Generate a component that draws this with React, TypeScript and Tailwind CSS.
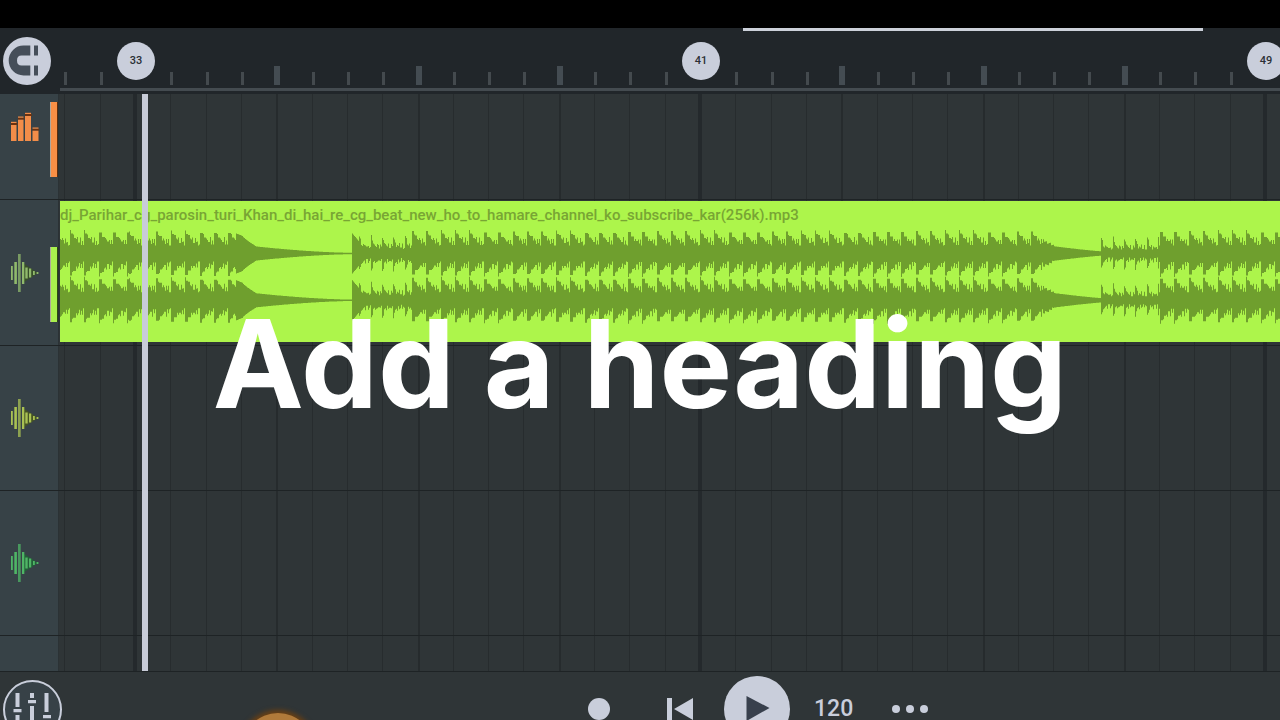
import React from "react";

type TrackKind = "drums" | "audio";

interface Track {
  name: string;
  kind: TrackKind;
  tone: string;
  shade: string;
  strip?: string;
  clip?: string;
}

const tracks: Track[] = [
  { name: "Drums", kind: "drums", tone: "fill-[#f38d49]", shade: "fill-[#6b3210]", strip: "bg-[#f98f45] border-r-[#5c2c0c]" },
  {
    name: "Audio 1",
    kind: "audio",
    tone: "fill-[#90b96c]",
    shade: "fill-[#3a5420]",
    strip: "bg-[#aaf04e] border-r-[#2c4a10]",
    clip: "dj_Parihar_cg_parosin_turi_Khan_di_hai_re_cg_beat_new_ho_to_hamare_channel_ko_subscribe_kar(256k).mp3",
  },
  { name: "Audio 2", kind: "audio", tone: "fill-[#a9c153]", shade: "fill-[#4b5a1a]" },
  { name: "Audio 3", kind: "audio", tone: "fill-[#4fb566]", shade: "fill-[#1d6a33]" },
  { name: "Audio 4", kind: "audio", tone: "fill-[#4fb5a0]", shade: "fill-[#1d6a5c]" },
];

const bars = Array.from({ length: 16 }, (_, i) => i);

/* The first segment starts before the visible range, so it carries no marker */
const segments = [
  { start: 25, marker: false },
  { start: 33, marker: true },
  { start: 41, marker: true },
  { start: 49, marker: true },
];

/* Half-height of the waveform, one value per pixel of a beat */
const loud = [22, 21, 20, 18, 17, 16, 14, 15, 12, 11, 15, 10, 13, 8];
const soft = [17, 14, 10, 8, 9, 7, 9, 7, 6, 9, 6];

function level(x: number, side: number): number {
  const wobble = ((Math.floor(x) * 37 + side * 11) % 7) - 3;
  const beat = (start: number, period: number, shape: number[]) => {
    const phase = (((x - start) % period) + period) % period;
    return shape[Math.min(shape.length - 1, Math.floor(phase))];
  };
  if (x < 176) return Math.max(8, beat(9.4, 14.4, loud) + wobble * 0.5);
  if (x < 182) return 20 - (x - 176) * 0.4;
  if (x < 196) return 17.6 - 10.6 * Math.pow((x - 182) / 14, 0.8);
  if (x < 292) return 0.7 + 6.3 * Math.pow((292 - x) / 96, 1.6);
  if (x < 299) return 20 - (x - 292) * 1.2;
  if (x < 351) return beat(299, 11.3, soft) + wobble * 0.5;
  if (x < 983) return Math.max(8, beat(351.4, 14.4, loud) + wobble * 0.5);
  if (x < 994) return 13 - (x - 983) * 0.5 + wobble * 0.4;
  if (x < 1041) return 2.2 + 5 * Math.pow((1041 - x) / 47, 1.2);
  if (x < 1099) return Math.max(4, beat(1041, 11.3, soft) - 1.5 + wobble * 0.5);
  return Math.max(8, beat(1099.4, 14.4, loud) + wobble * 0.5);
}

function channel(center: number, length: number): string {
  const top: string[] = [];
  const bottom: string[] = [];
  for (let x = 0; x < length; x++) {
    const up = (center - level(x, 0)).toFixed(1);
    const down = (center + level(x, 1)).toFixed(1);
    top.push(`L${x} ${up}H${x + 1}`);
    bottom.unshift(`L${x + 1} ${down}H${x}`);
  }
  return `M0 ${center}${top.join("")}${bottom.join("")}Z`;
}

const wavePath = channel(31.5, 1700) + channel(78.3, 1700);

function DrumsIcon({ tone, shade }: { tone: string; shade: string }) {
  const columns = [
    [0, 13, 5.5],
    [7, 7.7, 5.5],
    [14, 4, 6],
    [21.5, 18.7, 6],
  ];
  return (
    <svg className="h-[30px] w-7" viewBox="0 0 28 30" aria-hidden="true">
      {columns.map(([x, y, w]) => (
        <g key={x}>
          <rect className={shade} x={x} y={y - 2} width={w + 0.8} height={2} />
          <rect className={tone} x={x} y={y - 3.2} width={w} height={1.2} />
          <rect className={tone} x={x} y={y} width={w} height={29 - y} />
        </g>
      ))}
    </svg>
  );
}

function WaveIcon({ tone, shade }: { tone: string; shade: string }) {
  const lines = [
    [0, 7, 1.8],
    [3.3, 11, 2.6],
    [7, 19, 2.7],
    [11, 11, 2.3],
    [14.3, 5.5, 2.4],
    [18, 4.5, 2.2],
    [22, 2, 1.8],
    [25.6, 1, 1.8],
  ];
  return (
    <svg className="h-[38px] w-7" viewBox="0 0 28 38" aria-hidden="true">
      <path className={shade} d="M12 9L27 19L12 29Z" opacity="0.75" />
      {lines.map(([x, half, w]) => (
        <rect
          key={x}
          className={tone}
          x={x}
          y={19 - half}
          width={w}
          height={half * 2}
          opacity={half === 19 ? 0.75 : 1}
        />
      ))}
    </svg>
  );
}

function Ruler() {
  return (
    <header className="relative flex h-[66px] shrink-0 bg-[#21262a]">
      <div className="flex w-[60px] shrink-0 items-center pl-[3px]">
        <button type="button" aria-label="Snap to grid" className="size-12 rounded-full bg-[#c9cedb]">
          <svg className="size-12 fill-[#454e59]" viewBox="0 0 48 48" aria-hidden="true">
            <path d="M27.3 8.5H20.5A14.8 15 0 0 0 20.5 38.5H27.3V28.5H18.5Q14 28.5 14 23.5Q14 18.5 18.5 18.5H27.3Z" />
            <path d="M31 8.5h4v10h-4zM31 28.5h4v10h-4z" />
          </svg>
        </button>
      </div>
      <div className="flex min-w-0 flex-1 flex-col overflow-hidden">
        <div className="-ml-[490px] flex h-[57px]">
          {segments.map(({ start, marker }) => (
            <div key={start} className="relative grid w-[565px] shrink-0 grid-cols-16 items-end">
              {bars.map((bar) =>
                bar === 0 ? (
                  <span key={bar} />
                ) : bar % 4 === 0 ? (
                  <span key={bar} className="-ml-0.5 h-[19px] w-1.5 bg-[#444c52]" />
                ) : (
                  <span key={bar} className="h-[13px] w-[3px] bg-[#444a4e]" />
                ),
              )}
              {marker && (
                <button
                  type="button"
                  className="absolute top-3.5 -left-[18px] size-[38px] rounded-full bg-[#c9cedb] text-[11px] leading-4 font-medium text-[#2b3036]"
                >
                  {start}
                </button>
              )}
            </div>
          ))}
        </div>
        <div className="mt-[3px] h-[3px] bg-[#444b50]" />
      </div>
      <div className="absolute top-0 right-[77px] left-[743px] h-[3px] bg-[#ccd1da]" />
    </header>
  );
}

function GridLines() {
  return (
    <div className="absolute inset-y-0 right-0 left-[60px] overflow-hidden">
      <div className="-ml-[490px] flex h-full">
        {segments.map(({ start }) => (
          <div key={start} className="grid w-[565px] shrink-0 grid-cols-16">
            {bars.map((bar) => (
              <span
                key={bar}
                className={
                  bar === 0
                    ? "-ml-0.5 border-l-4 border-[#24292c]"
                    : bar % 4 === 0
                      ? "border-l-2 border-[#262b2d]"
                      : "border-l border-[#272c2e]"
                }
              />
            ))}
          </div>
        ))}
      </div>
    </div>
  );
}

function TrackRow({ track }: { track: Track }) {
  return (
    <li className="relative flex min-h-[145px] shrink-0 border-b border-[#1e2325]">
      <button
        type="button"
        aria-label={track.name}
        className="flex w-[59px] shrink-0 items-center justify-between border-r border-[#2b3235] bg-[#374247] pl-[11px]"
      >
        {track.kind === "drums" ? (
          <DrumsIcon tone={track.tone} shade={track.shade} />
        ) : (
          <WaveIcon tone={track.tone} shade={track.shade} />
        )}
        {track.strip && (
          <span className={`mt-6 h-[75px] w-2 border-r border-l border-l-[#b0a79c] ${track.strip}`} />
        )}
      </button>
      <div className="min-w-0 flex-1 pt-px pb-[3px] pl-px">
        {track.clip && (
          <div className="h-[141px] overflow-hidden bg-[#adf54b]">
            <p className="h-[21px] pt-1 text-[15px] leading-5 font-medium whitespace-nowrap text-[#78a534]">
              {track.clip}
            </p>
            <svg className="h-[120px] w-[1700px] fill-[#6f9f2e]" viewBox="0 0 1700 120" aria-hidden="true">
              <path d={wavePath} />
            </svg>
          </div>
        )}
      </div>
    </li>
  );
}

function Transport() {
  return (
    <footer className="h-[49px] shrink-0 overflow-hidden border-t border-[#1e2325] bg-[#2f3537]">
      <div className="flex h-[74px] items-center pl-[3px]">
        <button type="button" aria-label="Mixer" className="size-[59px] rounded-full border-2 border-[#c9cedb] bg-[#374147]">
          <svg className="size-[55px] fill-[#c9cedb]" viewBox="0 0 55 55" aria-hidden="true">
            <path d="M10.5 11h4v14h-4zM8.5 27h8v3.2h-8zM10.5 33h4v12h-4z" />
            <path d="M25 11h4v5h-4zM23 18h8v3.2h-8zM25 24h4v21h-4z" />
            <path d="M39.5 11h4v19h-4zM38 33h8v3.2h-8zM39.5 39h4v6h-4z" />
          </svg>
        </button>
        <button
          type="button"
          aria-label="Instrument"
          className="mt-20 ml-[180px] size-[72px] rounded-full bg-[#b07a3a] shadow-[0_0_5px_3px_#6b4013]"
        />
        <button type="button" aria-label="Record" className="ml-[274px] size-[22px] rounded-full bg-[#c9cedb]" />
        <button type="button" aria-label="Back to start" className="ml-[57px]">
          <svg className="h-[22px] w-[26px] fill-[#c9cedb]" viewBox="0 0 26 22" aria-hidden="true">
            <path d="M0 0h5v22H0zM26 0v22L7 11z" />
          </svg>
        </button>
        <button type="button" aria-label="Play" className="ml-[31px] size-[66px] rounded-full bg-[#c9cedb]">
          <svg className="size-[66px] fill-[#38404d]" viewBox="0 0 66 66" aria-hidden="true">
            <path d="M22.5 20L45.5 32L22.5 45z" />
          </svg>
        </button>
        <button type="button" aria-label="Tempo" className="ml-6 text-[23px] leading-5 font-medium text-[#c9cedb]">
          120
        </button>
        <button type="button" aria-label="More options" className="ml-[39px] flex gap-1.5">
          <span className="size-2 rounded-full bg-[#c9cedb]" />
          <span className="size-2 rounded-full bg-[#c9cedb]" />
          <span className="size-2 rounded-full bg-[#c9cedb]" />
        </button>
      </div>
    </footer>
  );
}

export default function App() {
  return (
    <div className="relative flex h-screen flex-col overflow-hidden bg-black pt-7 font-['Roboto',sans-serif]">
      <Ruler />
      <main className="relative flex min-h-0 flex-1 flex-col overflow-hidden bg-[#2f3537]">
        <GridLines />
        <ul className="-mt-[39px] flex flex-col">
          {tracks.map((track) => (
            <TrackRow key={track.name} track={track} />
          ))}
        </ul>
        <div className="absolute inset-y-0 left-[142px] w-1.5 bg-[#c8ccd8]" />
      </main>
      <Transport />
      <h1 className="pointer-events-none absolute inset-0 flex items-center justify-center pt-2 font-['Inter',sans-serif] text-[122px] leading-none font-bold whitespace-nowrap text-white">
        Add a heading
      </h1>
    </div>
  );
}
